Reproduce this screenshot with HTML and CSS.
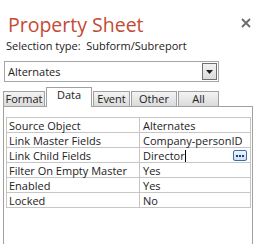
FILE: index.html
```html
<!DOCTYPE html>
<html lang="en">

<head>
  <meta charset="UTF-8" />
  <title>Property Sheet</title>
  <link rel="stylesheet" href="styles.css">
</head>

<body>
  <div class="sheet">
    <!-- Header -->
    <div class="header">
      <h1 class="title">Property Sheet</h1>
      <svg class="close" width="10" height="10" viewBox="0 0 10 10">
        <path d="M1 1 L9 9 M9 1 L1 9" stroke="#6b6b6b" stroke-width="1.8" />
      </svg>
    </div>
    <div class="selection">Selection type:&nbsp; Subform/Subreport</div>

    <!-- Object combo -->
    <div class="combo">
      <span class="combo-text">Alternates</span>
      <span class="combo-btn">
        <svg width="7" height="4" viewBox="0 0 7 4"><path d="M0 0 H7 L3.5 4 Z" fill="#222" /></svg>
      </span>
    </div>

    <!-- Tabs -->
    <div class="tabs">
      <div class="tab tab-format">Format</div>
      <div class="tab tab-data active">Data</div>
      <div class="tab tab-event">Event</div>
      <div class="tab tab-other">Other</div>
      <div class="tab tab-all">All</div>
    </div>

    <!-- Property grid -->
    <div class="panel">
      <table class="props">
        <tr><td class="name">Source Object</td><td class="value">Alternates</td></tr>
        <tr><td class="name">Link Master Fields</td><td class="value">Company-personID</td></tr>
        <tr>
          <td class="name">Link Child Fields</td>
          <td class="value editing">Director<span class="caret"></span>
            <span class="builder">
              <svg width="8" height="2" viewBox="0 0 8 2">
                <rect x="0" y="0" width="2" height="2" fill="#1a3f7a" />
                <rect x="3" y="0" width="2" height="2" fill="#1a3f7a" />
                <rect x="6" y="0" width="2" height="2" fill="#1a3f7a" />
              </svg>
            </span>
          </td>
        </tr>
        <tr><td class="name">Filter On Empty Master</td><td class="value">Yes</td></tr>
        <tr><td class="name">Enabled</td><td class="value">Yes</td></tr>
        <tr><td class="name">Locked</td><td class="value">No</td></tr>
      </table>
    </div>
  </div>
</body>

</html>
```

FILE: styles.css
```css
/* General Styles */
body {
  margin: 0;
  padding: 0;
  background-color: #ffffff;
  font-family: "Open Sans", "Noto Sans", sans-serif;
  color: #222;
  overflow: hidden;
}

.sheet {
  width: 255px;
  height: 244px;
  display: flex;
  flex-direction: column;
}

/* Header */
.header {
  display: flex;
  justify-content: space-between;
  align-items: flex-start;
  margin-top: 13px;
}

.title {
  margin: 0 0 0 8px;
  font-size: 19.5px;
  line-height: 24px;
  font-weight: 400;
  color: #c44a36;
}

.close {
  margin: 5px 4px 0 0;
}

.selection {
  margin: 1px 0 0 6px;
  font-size: 11px;
  line-height: 15px;
  color: #222;
  white-space: pre;
}

/* Combo box */
.combo {
  margin: 8px 0 0 4px;
  width: 213px;
  height: 19px;
  border: 1px solid #a6a6a6;
  display: flex;
  align-items: center;
  justify-content: space-between;
}

.combo-text {
  padding-left: 3px;
  font-size: 11px;
}

.combo-btn {
  width: 13px;
  height: 15px;
  margin-right: 1px;
  border: 1px solid #707070;
  background: linear-gradient(#f2f2f2, #dcdcdc);
  display: flex;
  align-items: center;
  justify-content: center;
}

/* Tabs */
.tabs {
  margin: 5px 0 0 3px;
  height: 19px;
  display: flex;
  align-items: flex-end;
  gap: 1px;
  position: relative;
  z-index: 1;
}

.tab {
  height: 15px;
  border: 1px solid #a0a0a0;
  border-bottom: none;
  background: linear-gradient(#f4f4f4, #dadada);
  font-size: 11px;
  line-height: 14px;
  text-align: center;
  box-sizing: border-box;
}

.tab-format { width: 42px; }
.tab-data { width: 46px; }
.tab-event { width: 37px; }
.tab-other { width: 46px; }
.tab-all { width: 41px; }

.tab.active {
  height: 20px;
  background: #ffffff;
  line-height: 13px;
  margin-bottom: -1px;
}

/* Property panel */
.panel {
  flex: 1;
  margin: 0 2px 0 3px;
  border: 1px solid #a0a0a0;
  border-bottom: none;
  padding: 10px 1px 0 2px;
}

.props {
  width: 100%;
  border-collapse: collapse;
  font-size: 11px;
}

.props td {
  border: 1px solid #c6c6c6;
  height: 14px;
  padding: 0 0 0 2px;
  line-height: 13px;
  white-space: nowrap;
}

.props .name {
  width: 130px;
}

.props .value {
  padding-left: 3px;
}

.editing {
  position: relative;
}

.caret {
  display: inline-block;
  width: 1px;
  height: 12px;
  background: #000;
  vertical-align: -2px;
}

.builder {
  position: absolute;
  right: 3px;
  top: 2px;
  width: 12px;
  height: 9px;
  border: 1px solid #3b6cb3;
  border-radius: 2px;
  background: linear-gradient(#eef5fd, #cfe0f5);
  display: flex;
  align-items: center;
  justify-content: center;
}
```
